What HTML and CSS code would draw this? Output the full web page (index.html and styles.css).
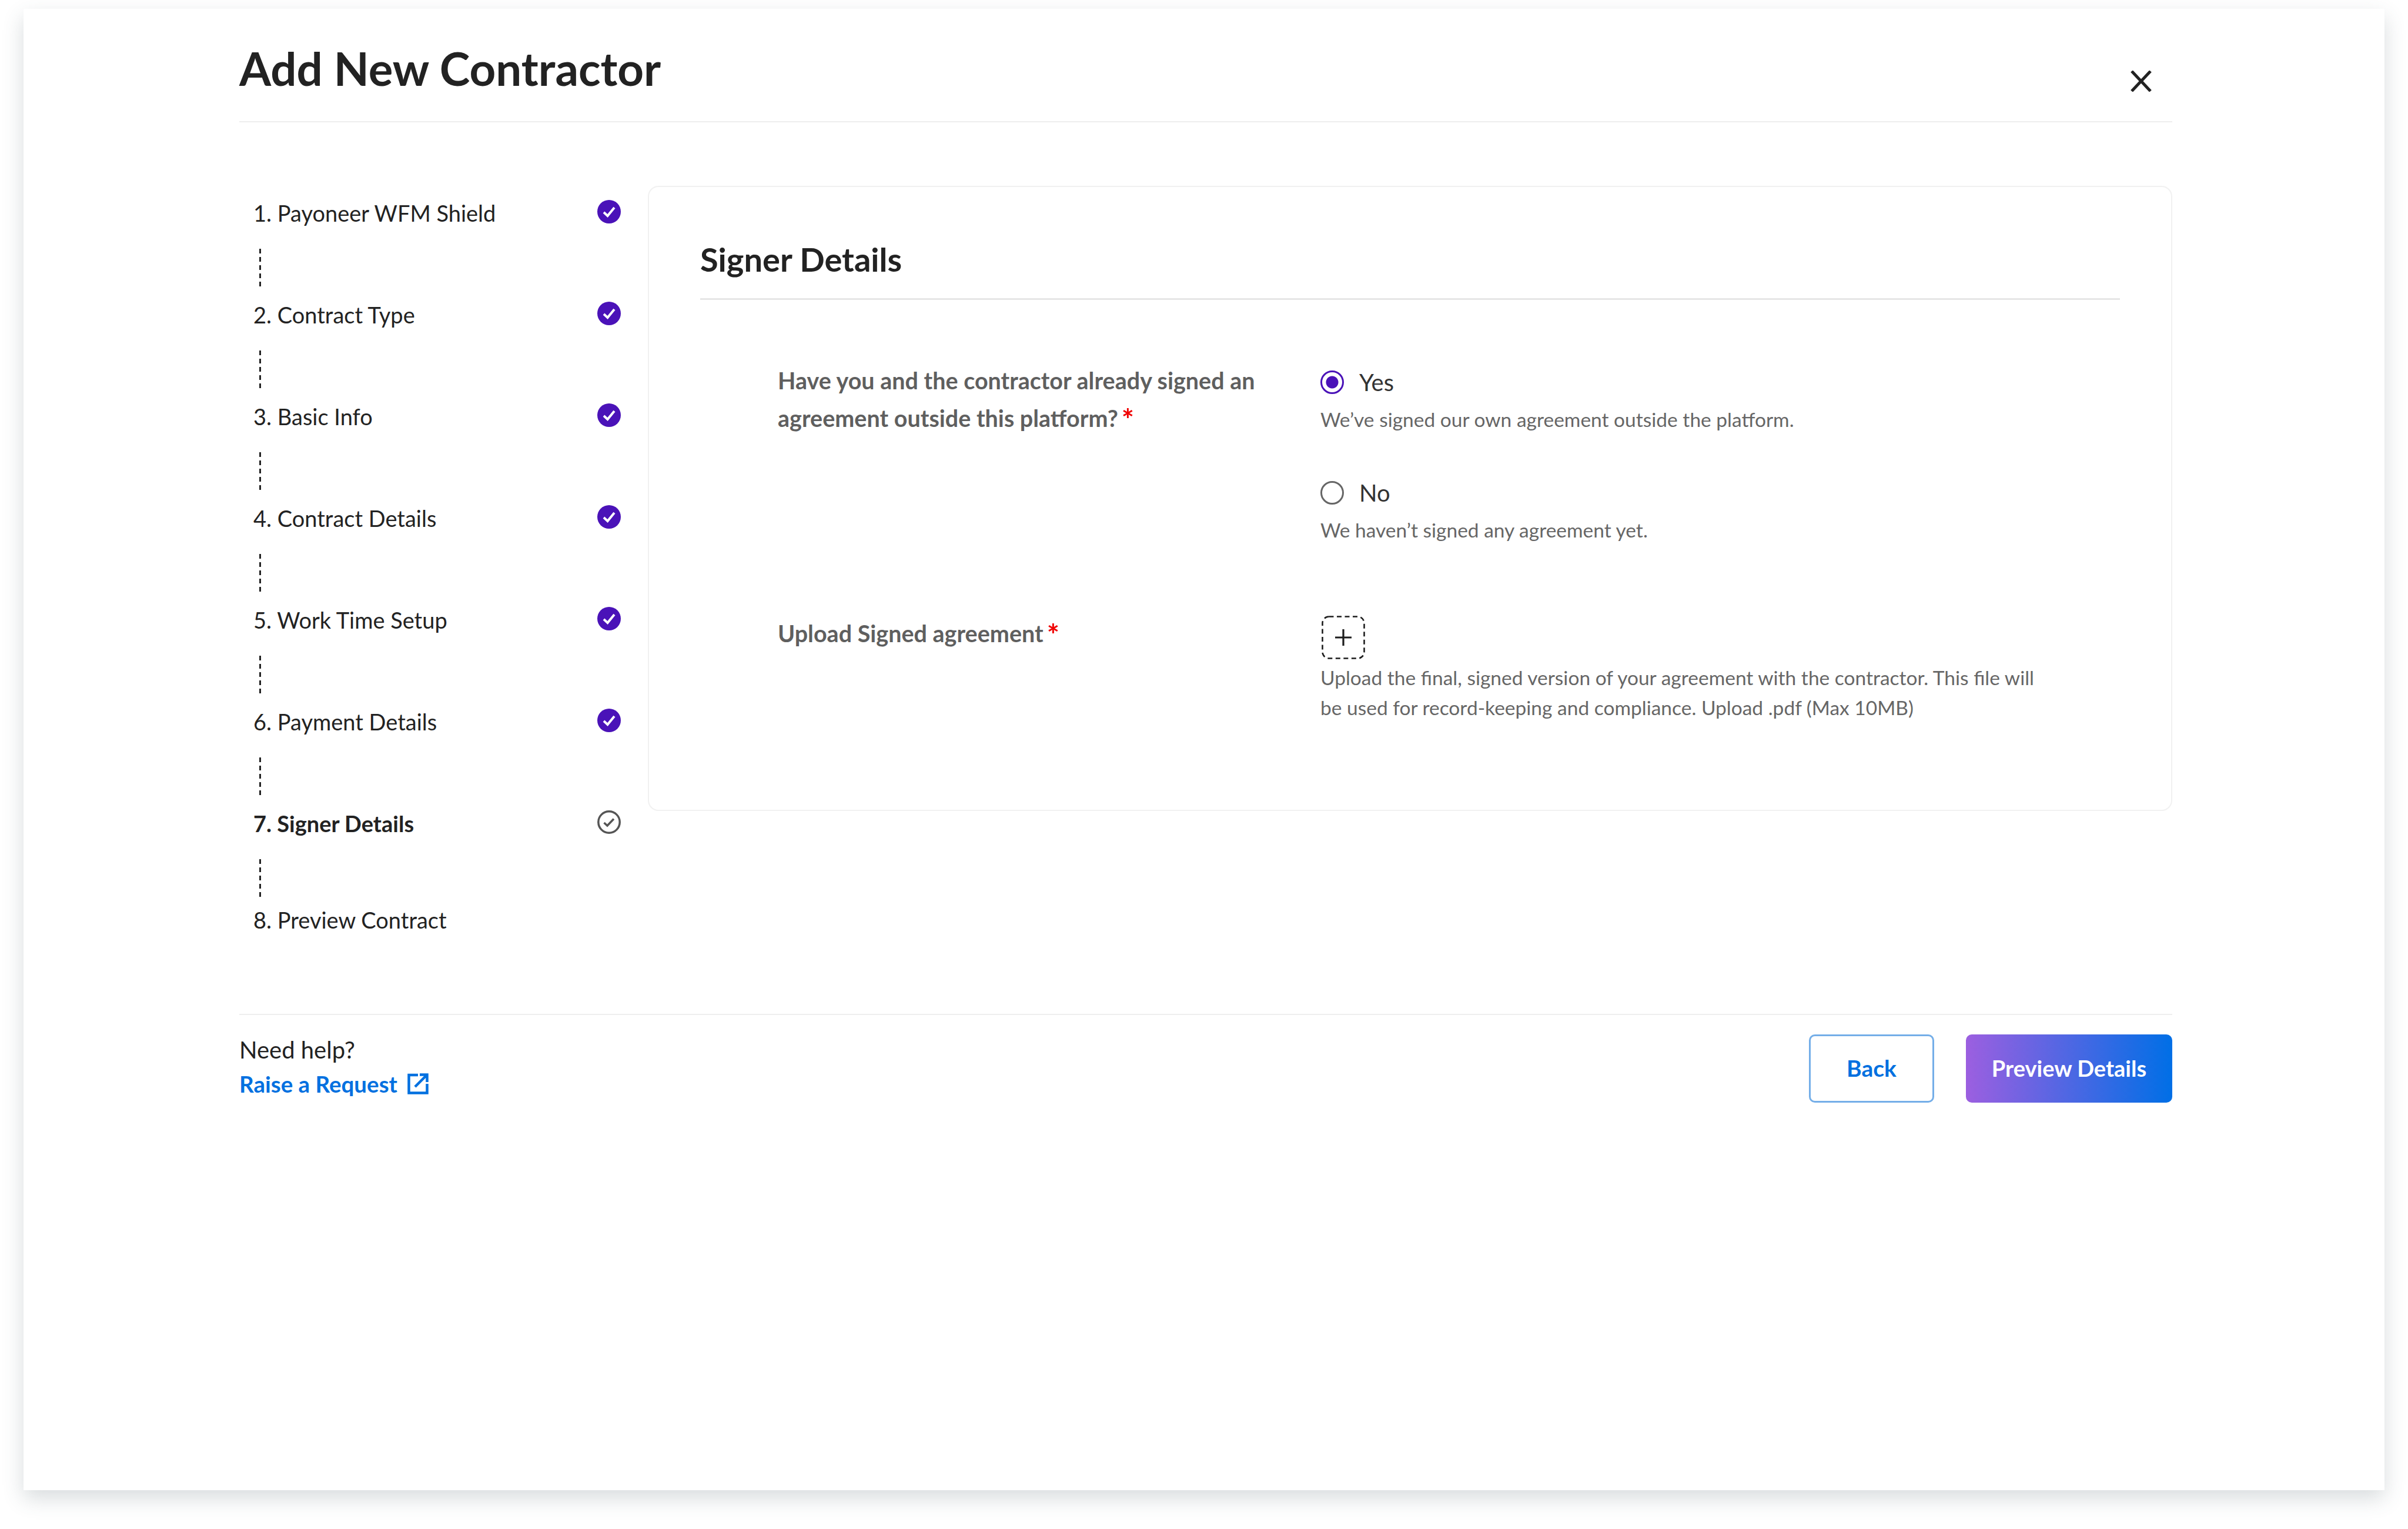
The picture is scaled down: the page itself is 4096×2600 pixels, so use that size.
FILE: index.html
```html
<!DOCTYPE html>
<html lang="en">
<head>
    <meta charset="UTF-8">
    <title>Add New Contractor</title>
    <link rel="stylesheet" href="styles.css">
</head>
<body>
    <div class="modal">
        <div class="modal-header">
            <h1>Add New Contractor</h1>
            <svg class="close-icon" viewBox="0 0 36 36"><path d="M2 1 L34 35 M34 1 L2 35"/></svg>
        </div>

        <div class="modal-main">
            <div class="steps">
                <div class="step"><span>1. Payoneer WFM Shield</span><svg class="check" viewBox="0 0 40 40"><circle cx="20" cy="20" r="20"/><path d="M11 21 L17.5 27 L29 13"/></svg></div>
                <div class="step-line"></div>
                <div class="step"><span>2. Contract Type</span><svg class="check" viewBox="0 0 40 40"><circle cx="20" cy="20" r="20"/><path d="M11 21 L17.5 27 L29 13"/></svg></div>
                <div class="step-line"></div>
                <div class="step"><span>3. Basic Info</span><svg class="check" viewBox="0 0 40 40"><circle cx="20" cy="20" r="20"/><path d="M11 21 L17.5 27 L29 13"/></svg></div>
                <div class="step-line"></div>
                <div class="step"><span>4. Contract Details</span><svg class="check" viewBox="0 0 40 40"><circle cx="20" cy="20" r="20"/><path d="M11 21 L17.5 27 L29 13"/></svg></div>
                <div class="step-line"></div>
                <div class="step"><span>5. Work Time Setup</span><svg class="check" viewBox="0 0 40 40"><circle cx="20" cy="20" r="20"/><path d="M11 21 L17.5 27 L29 13"/></svg></div>
                <div class="step-line"></div>
                <div class="step"><span>6. Payment Details</span><svg class="check" viewBox="0 0 40 40"><circle cx="20" cy="20" r="20"/><path d="M11 21 L17.5 27 L29 13"/></svg></div>
                <div class="step-line"></div>
                <div class="step step-active"><span>7. Signer Details</span><svg class="check-outline" viewBox="0 0 40 40"><circle cx="20" cy="20" r="18.2"/><path d="M11.5 21 L17 26 L28 14.5"/></svg></div>
                <div class="step-line"></div>
                <div class="step step-last"><span>8. Preview Contract</span></div>
            </div>

            <div class="panel">
                <h2>Signer Details</h2>
                <div class="form-row form-row-first">
                    <div class="form-label">Have you and the contractor already signed an<br>agreement outside this platform?<span class="req">*</span></div>
                    <div class="form-field">
                        <div class="radio-row"><span class="radio radio-on"></span>Yes</div>
                        <div class="hint">We’ve signed our own agreement outside the platform.</div>
                        <div class="radio-row radio-row-next"><span class="radio"></span>No</div>
                        <div class="hint">We haven’t signed any agreement yet.</div>
                    </div>
                </div>
                <div class="form-row form-row-upload">
                    <div class="form-label">Upload Signed agreement<span class="req">*</span></div>
                    <div class="form-field">
                        <svg class="upload-box" viewBox="0 0 74 74"><rect x="1.5" y="1.5" width="71" height="71" rx="11"/><path d="M37 23 V51 M23 37 H51"/></svg>
                        <div class="hint">Upload the final, signed version of your agreement with the contractor. This file will<br>be used for record-keeping and compliance. Upload .pdf (Max 10MB)</div>
                    </div>
                </div>
            </div>
        </div>

        <div class="modal-footer">
            <div class="help">
                <div class="help-title">Need help?</div>
                <a class="help-link">Raise a Request<svg viewBox="0 0 36 36"><path d="M18 3 H2.5 V33.5 H33.5 V18 M21 2.5 H33.5 V15 M33 3 L13 23"/></svg></a>
            </div>
            <div class="actions">
                <button class="btn btn-back">Back</button>
                <button class="btn btn-primary">Preview Details</button>
            </div>
        </div>
    </div>
</body>
</html>
```

FILE: styles.css
```css
* {
    margin: 0;
    padding: 0;
    box-sizing: border-box;
}

body {
    width: 4096px;
    height: 2600px;
    overflow: hidden;
    background: #fff;
    font-family: "Lato", "Noto Sans", sans-serif;
    color: #222;
}

.modal {
    width: 4016px;
    height: 2519px;
    margin: 15px 40px 0;
    padding: 0 361px 0 367px;
    background: #fff;
    box-shadow: 0 14px 34px rgba(60, 80, 90, 0.2);
}

.modal-header {
    height: 193px;
    display: flex;
    justify-content: space-between;
    border-bottom: 2px solid #eeeeee;
}

.modal-header h1 {
    font-size: 78px;
    font-weight: 700;
    line-height: 90px;
    margin-top: 56px;
    color: #222;
}

.close-icon {
    width: 36px;
    height: 36px;
    margin: 105px 35px 0 0;
    fill: none;
    stroke: #222;
    stroke-width: 5;
}

.modal-main {
    display: flex;
    padding: 108px 0 0;
    height: 1518px;
    border-bottom: 2px solid #eeeeee;
}

/* left steps */
.steps {
    width: 695px;
    padding: 14px 46px 0 24px;
    flex-shrink: 0;
}

.step {
    height: 64px;
    display: flex;
    align-items: center;
    justify-content: space-between;
    font-size: 38px;
    color: #222;
}

.step-active {
    font-weight: 700;
}

.step-last {
    margin-top: -9px;
}

.step-line {
    width: 2.5px;
    height: 64px;
    margin: 29px 0 16px 10px;
    background: repeating-linear-gradient(to bottom, #222 0, #222 8px, transparent 8px, transparent 14px);
}

.check {
    width: 40px;
    height: 40px;
    margin-top: -5px;
    fill: #4a12b8;
    stroke: none;
}

.check path {
    fill: none;
    stroke: #fff;
    stroke-width: 4;
}

.check-outline {
    width: 40px;
    height: 40px;
    margin-top: -5px;
    fill: none;
    stroke: #555;
    stroke-width: 3.5;
}

/* signer panel */
.panel {
    flex: 1;
    height: 1063px;
    padding: 0 87px;
    border: 2px solid #f1f1f1;
    border-radius: 18px;
}

.panel h2 {
    font-size: 56px;
    font-weight: 700;
    line-height: 80px;
    padding: 83px 0 26px;
    border-bottom: 3px solid #e6e6e6;
    color: #222;
}

.form-row {
    display: flex;
    padding-left: 132px;
}

.form-row-first {
    margin-top: 105px;
}

.form-row-upload {
    margin-top: 118px;
}

.form-label {
    width: 923px;
    flex-shrink: 0;
    font-size: 39.5px;
    font-weight: 700;
    line-height: 64px;
    color: #5f5f5f;
}

.req {
    font-size: 50px;
    line-height: 0;
    color: #f00000;
    margin-left: 6px;
    vertical-align: -6px;
}

.radio-row {
    display: flex;
    align-items: center;
    height: 64px;
    font-size: 40px;
    color: #333;
    margin-top: 3px;
}

.radio-row-next {
    margin-top: 67px;
}

.radio {
    width: 40px;
    height: 40px;
    margin-right: 26px;
    border: 3.5px solid #666;
    border-radius: 50%;
    flex-shrink: 0;
}

.radio-on {
    border-color: #4a12b8;
    background: radial-gradient(circle, #4a12b8 0, #4a12b8 10px, #fff 11px);
}

.hint {
    margin-top: 6px;
    font-size: 33.5px;
    line-height: 51px;
    color: #666;
    white-space: nowrap;
}

.upload-box {
    display: block;
    width: 74px;
    height: 74px;
    margin: 2px 0 0 2px;
    fill: none;
    stroke: #1c1c1c;
    stroke-width: 2.6;
}

.upload-box rect {
    stroke-dasharray: 8 5.5;
}

.upload-box path {
    stroke-width: 3.2;
}

/* footer */
.modal-footer {
    display: flex;
    justify-content: space-between;
    padding-top: 33px;
}

.help-title {
    font-size: 40px;
    line-height: 58px;
    margin-top: -3px;
    color: #222;
}

.help-link {
    display: flex;
    align-items: center;
    font-size: 38.5px;
    font-weight: 700;
    line-height: 58px;
    color: #0070e0;
}

.help-link svg {
    width: 36px;
    height: 36px;
    margin-left: 17px;
    fill: none;
    stroke: #0070e0;
    stroke-width: 4.5;
}

.actions {
    display: flex;
    gap: 54px;
}

.btn {
    height: 116px;
    padding-bottom: 3px;
    border-radius: 10px;
    font-family: inherit;
    font-weight: 700;
}

.btn-back {
    width: 213px;
    background: #fff;
    border: 3px solid #74aee8;
    font-size: 39px;
    color: #0070e0;
}

.btn-primary {
    width: 351px;
    border: none;
    background: linear-gradient(90deg, #9c5fe0 0%, #006fe6 100%);
    font-size: 38px;
    color: #fff;
}
```
